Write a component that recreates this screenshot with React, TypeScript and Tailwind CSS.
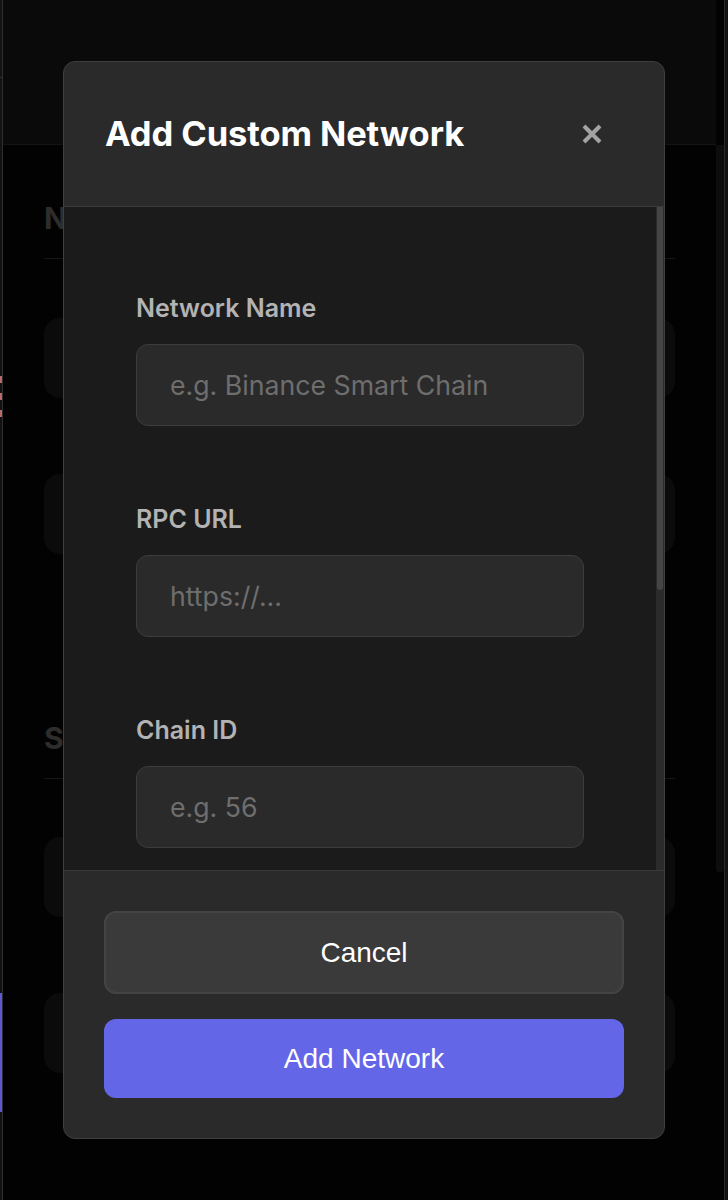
import React from "react";

function Field({ label, placeholder }: { label: string; placeholder: string }) {
  return (
    <div className="flex flex-col">
      <label className="text-[25px] leading-[36px] font-semibold text-[#b3b3b3] mb-[18px]">{label}</label>
      <div className="h-[82px] rounded-[12px] border border-[#3d3d3d] bg-[#2a2a2a] flex items-center px-[33px]">
        <span className="text-[26.7px] text-[#6e6e6e]">{placeholder}</span>
      </div>
    </div>
  );
}

function BgCard() {
  return <div className="h-[80px] rounded-[16px] bg-[#0b0b0b]" />;
}

export default function App() {
  return (
    <div
      className="relative w-[728px] h-[1200px] overflow-hidden bg-[#020202]"
      style={{ fontFamily: "Inter, 'Noto Sans', sans-serif" }}
    >
      {/* background page (dimmed) */}
      <div className="flex h-full">
        <div className="w-[3px] border-r border-[#2e2e2e] bg-[#121212] flex flex-col">
          <div className="h-[78px] border-b border-[#333]" />
          <div className="mt-[298px] flex flex-col gap-[10px]">
            <div className="h-[7px] bg-[#b96a6a]" />
            <div className="h-[7px] bg-[#b96a6a]" />
            <div className="h-[7px] bg-[#b96a6a]" />
          </div>
          <div className="mt-[576px] h-[119px] bg-[#5d58d6]" />
        </div>
        <div className="flex-1 flex flex-col">
          <div className="h-[145px] bg-[#0a0a0a] border-b border-[#141414] flex items-center justify-center pt-[8px]">
            <span className="text-[30px] font-bold text-[#2c2c2c]">Settings</span>
          </div>
          <div className="flex-1 px-[41px] pt-[53px]">
            <div className="text-[30px] font-bold text-[#2d2d2d] leading-[40px]">Networks</div>
            <div className="mt-[20px] h-px bg-[#161616]" />
            <div className="mt-[59px] flex flex-col gap-[76px]">
              <BgCard />
              <BgCard />
            </div>
            <div className="mt-[164px] text-[30px] font-bold text-[#2d2d2d] leading-[40px]">Security</div>
            <div className="mt-[20px] h-px bg-[#161616]" />
            <div className="mt-[58px] flex flex-col gap-[76px]">
              <BgCard />
              <BgCard />
            </div>
          </div>
        </div>
        <div className="w-[12px] flex">
          <div className="w-[8px] flex flex-col pt-[145px]">
            <div className="h-[727px] bg-[#0d0d0d] rounded-b-[3px]" />
          </div>
          <div className="w-[4px] border-l border-[#2a2a2a] bg-[#111]" />
        </div>
      </div>

      {/* modal overlay */}
      <div className="absolute inset-0 flex items-center justify-center">
        <div className="w-[602px] h-[1078px] rounded-[12px] border border-[#3f3f3f] bg-[#2a2a2a] flex flex-col overflow-hidden">
          <div className="h-[145px] shrink-0 border-b border-[#3a3a3a] flex items-center justify-between pl-[41px] pr-[61px]">
            <h2 className="text-[34.5px] font-bold text-white tracking-[-0.1px]">Add Custom Network</h2>
            <svg width="22" height="22" viewBox="0 0 22 22" className="text-[#a3a3a3]">
              <path d="M3 3 L19 19 M19 3 L3 19" stroke="currentColor" strokeWidth="4" strokeLinecap="butt" />
            </svg>
          </div>
          <div className="flex-1 min-h-0 flex bg-[#1b1b1b]">
            <div className="flex-1 overflow-hidden px-[72px] pt-[83px]">
              <div className="flex flex-col gap-[75px]">
                <Field label="Network Name" placeholder="e.g. Binance Smart Chain" />
                <Field label="RPC URL" placeholder="https://..." />
                <Field label="Chain ID" placeholder="e.g. 56" />
                <Field label="Currency Symbol" placeholder="e.g. BNB" />
              </div>
            </div>
            <div className="w-[8px] bg-[#2b2b2b] flex flex-col">
              <div className="h-[383px] mx-[1px] bg-[#454545] rounded-b-[4px]" />
            </div>
          </div>
          <div className="shrink-0 border-t border-[#3a3a3a] px-[40px] pt-[40px] pb-[40px] flex flex-col gap-[25px]">
            <button
              className="h-[83px] rounded-[12px] border-2 border-[#444] bg-[#3a3a3a] text-white text-[28px]"
              style={{ fontFamily: "'Liberation Sans', Arial, sans-serif" }}
            >
              Cancel
            </button>
            <button
              className="h-[79px] rounded-[12px] bg-[#6466e8] text-white text-[28px]"
              style={{ fontFamily: "'Liberation Sans', Arial, sans-serif" }}
            >
              Add Network
            </button>
          </div>
        </div>
      </div>
    </div>
  );
}
